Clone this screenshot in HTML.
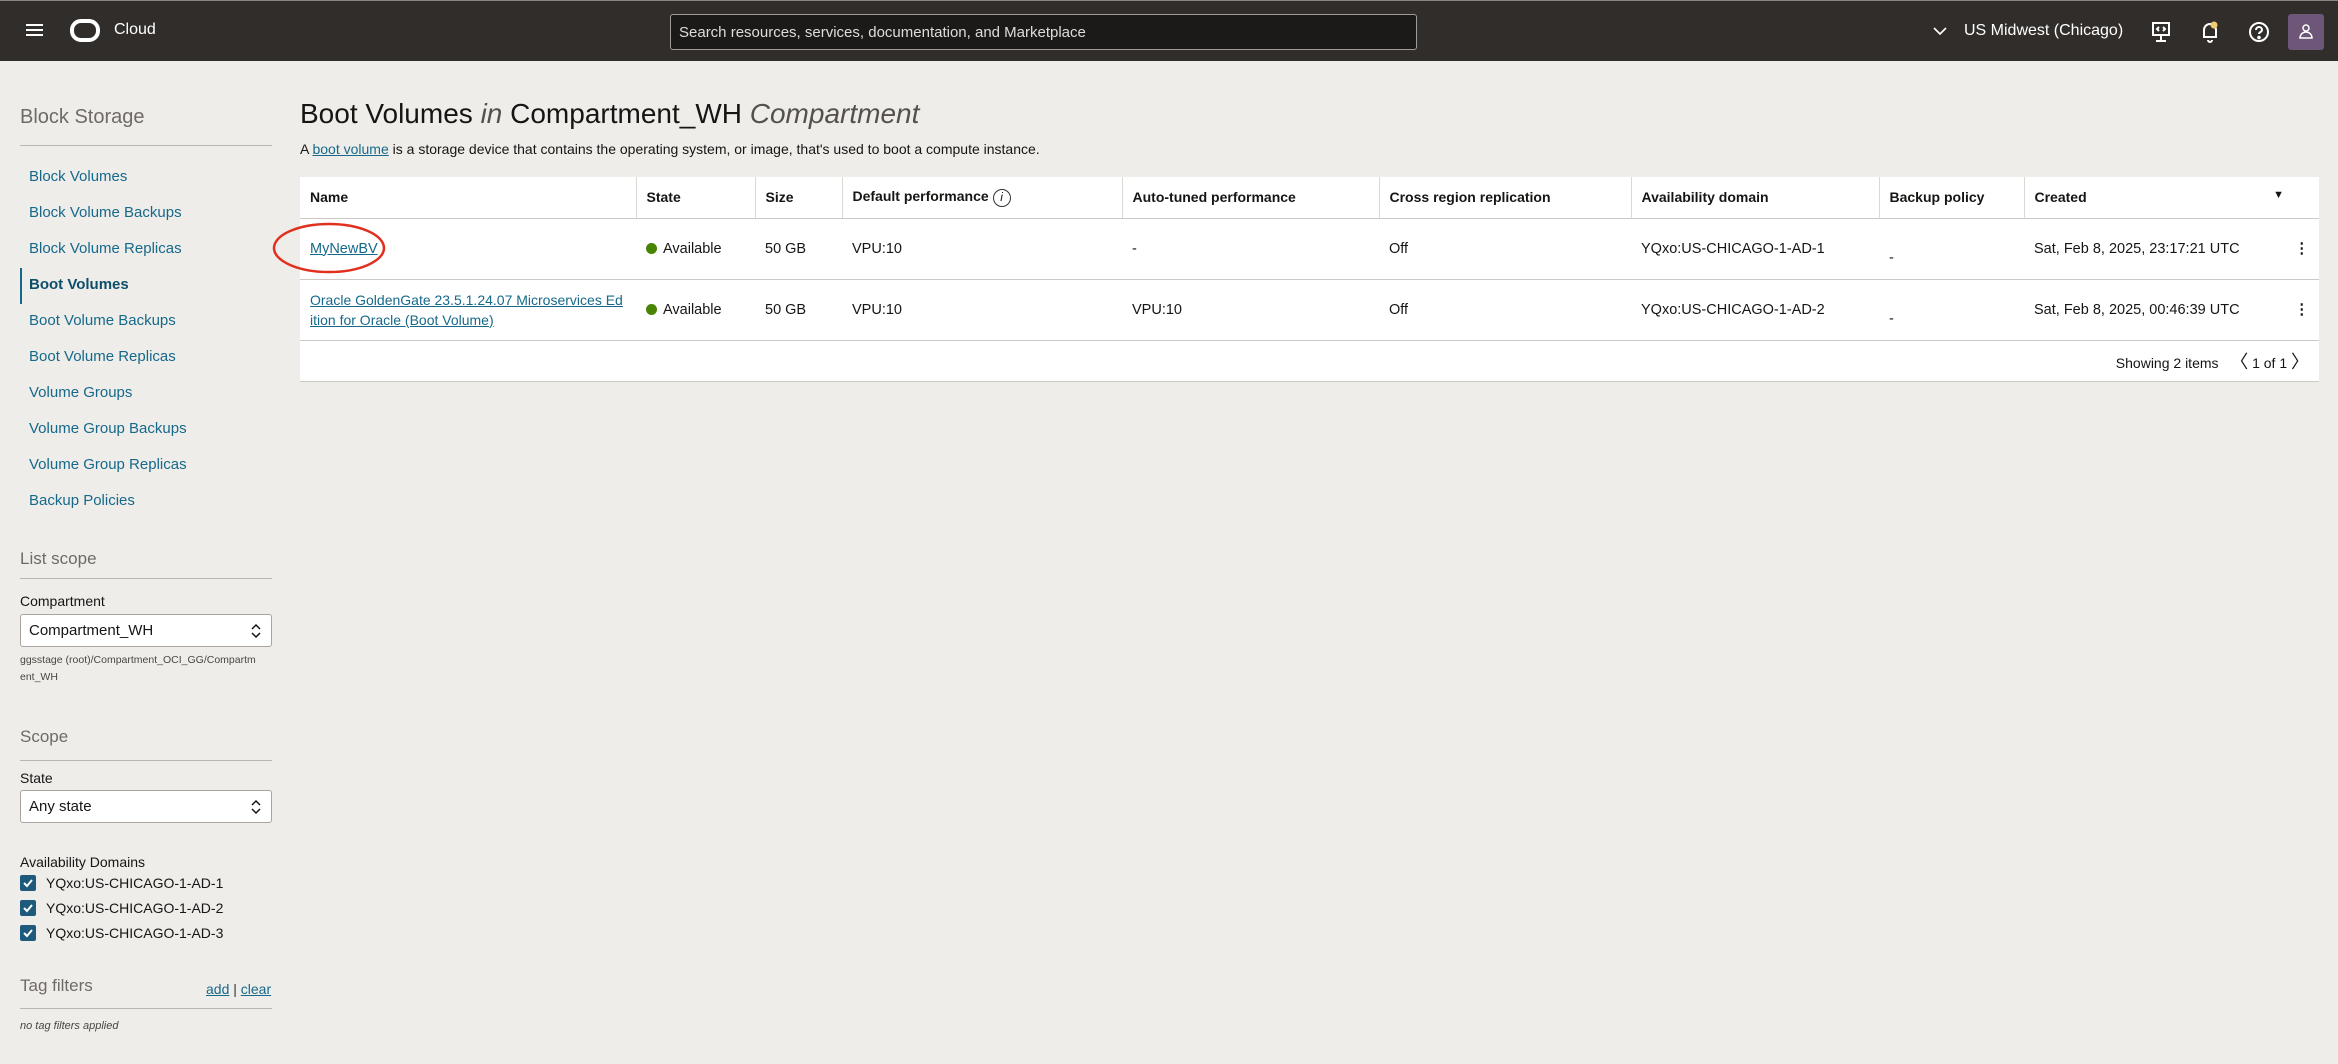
<!DOCTYPE html>
<html><head><meta charset="utf-8">
<style>
*{box-sizing:border-box;margin:0;padding:0}
body{width:2338px;height:1064px;overflow:hidden;background:#efedea;font-family:"Liberation Sans",Arial,sans-serif;color:#161513;position:relative}
.hdr{position:absolute;left:0;top:0;width:2338px;height:61px;background:#312d2a;border-top:1px solid #8a8580}
.abs{position:absolute}
.link{color:#16698a}
.side .lnk{position:absolute;left:29px;font-size:15px;color:#16698a}
.sec{position:absolute;left:20px;font-size:17px;color:#6f6a65}
.line{position:absolute;left:20px;width:252px;height:1px;background:#b9b4ae}
.lbl{position:absolute;left:20px;font-size:14px;color:#161513}
.sel{position:absolute;left:20px;width:252px;height:33px;background:#fff;border:1px solid #a9a49f;border-radius:3px;font-size:15px;padding:7px 8px}
.sel svg{position:absolute;right:9px;top:9px}
.cb{position:absolute;left:20px;width:16px;height:16px;background:#1d5a7b;border-radius:2px}
.cbt{position:absolute;left:46px;font-size:14px}
table{position:absolute;left:300px;top:177px;width:2019px;border-collapse:collapse;background:#fff;font-size:14.5px}
td,th{border-bottom:1px solid #ccc8c3;text-align:left;padding:0 10px;vertical-align:middle;white-space:nowrap}
th{height:41px;font-weight:bold;font-size:14px;border-right:1px solid #dcd8d3}
td{height:61px}
.dot{display:inline-block;width:11px;height:11px;border-radius:50%;background:#478400;margin-right:6px;vertical-align:-1px}
</style></head><body>
<div class="hdr">
 <div class="abs" style="left:26px;top:23px;width:17px;height:2px;background:#fff;box-shadow:0 5px 0 #fff,0 10px 0 #fff"></div>
 <div class="abs" style="left:70px;top:18px;width:30px;height:23px;border:4px solid #fff;border-radius:11px"></div>
 <div class="abs" style="left:114px;top:20px;font-size:16px;color:#fff">Cloud</div>
 <div class="abs" style="left:670px;top:13px;width:747px;height:36px;background:#1c1a18;border:1px solid #a19c97;border-radius:3px;color:#ddd;font-size:15px;padding:9px 8px">Search resources, services, documentation, and Marketplace</div>
 <svg class="abs" style="left:1933px;top:25px" width="14" height="10" viewBox="0 0 14 10" fill="none" stroke="#fff" stroke-width="1.6"><path d="M1 2l6 6 6-6"/></svg>
 <div class="abs" style="left:1964px;top:21px;color:#fff;font-size:16px">US Midwest (Chicago)</div>
 <svg class="abs" style="left:2151px;top:20px" width="20" height="22" viewBox="0 0 20 22" fill="none" stroke="#fff" stroke-width="2"><rect x="2" y="2" width="16" height="12"/><path d="M10 14v6M5 20h10M8 6l-2 2 2 2M12 6l2 2-2 2"/></svg>
 <svg class="abs" style="left:2200px;top:19px" width="20" height="24" viewBox="0 0 20 24" fill="none" stroke="#fff" stroke-width="2"><path d="M4 17V10a6 6 0 0112 0v7H3M8 20a2 2 0 004 0"/><circle cx="14" cy="5" r="3.5" fill="#f0cc71" stroke="none"/></svg>
 <svg class="abs" style="left:2248px;top:20px" width="22" height="22" viewBox="0 0 22 22" fill="none" stroke="#fff" stroke-width="2"><circle cx="11" cy="11" r="9"/><path d="M8 9a3 3 0 116 0c0 2-3 2-3 4"/><circle cx="11" cy="16.5" r=".8" fill="#fff"/></svg>
 <div class="abs" style="left:2288px;top:13px;width:36px;height:36px;background:#6d5677;border-radius:3px"><svg width="36" height="36" viewBox="0 0 36 36" fill="none" stroke="#fff" stroke-width="1.5"><circle cx="18" cy="14" r="3"/><path d="M12 24a6 6 0 0112 0z"/></svg></div>
</div>

<div class="side">
 <div class="sec" style="top:106px;font-size:20px">Block Storage</div>
 <div class="line" style="top:145px"></div>
 <div class="lnk" style="top:168px">Block Volumes</div>
 <div class="lnk" style="top:204px">Block Volume Backups</div>
 <div class="lnk" style="top:240px">Block Volume Replicas</div>
 <div class="abs" style="left:20px;top:268px;width:2px;height:36px;background:#16698a"></div>
 <div class="lnk" style="top:276px;font-weight:bold;color:#0d4f6b">Boot Volumes</div>
 <div class="lnk" style="top:312px">Boot Volume Backups</div>
 <div class="lnk" style="top:348px">Boot Volume Replicas</div>
 <div class="lnk" style="top:384px">Volume Groups</div>
 <div class="lnk" style="top:420px">Volume Group Backups</div>
 <div class="lnk" style="top:456px">Volume Group Replicas</div>
 <div class="lnk" style="top:492px">Backup Policies</div>
 <div class="sec" style="top:549px">List scope</div>
 <div class="line" style="top:578px"></div>
 <div class="lbl" style="top:593px">Compartment</div>
 <div class="sel" style="top:614px">Compartment_WH<svg width="12" height="14" viewBox="0 0 12 14" fill="none" stroke="#161513" stroke-width="1.5"><path d="M2 5l4-4 4 4M2 9l4 4 4-4"/></svg></div>
 <div class="abs" style="left:20px;top:652px;font-size:10.5px;color:#4a4642;line-height:17px;width:255px">ggsstage (root)/Compartment_OCI_GG/Compartm<br>ent_WH</div>
 <div class="sec" style="top:727px">Scope</div>
 <div class="line" style="top:760px"></div>
 <div class="lbl" style="top:770px">State</div>
 <div class="sel" style="top:790px">Any state<svg width="12" height="14" viewBox="0 0 12 14" fill="none" stroke="#161513" stroke-width="1.5"><path d="M2 5l4-4 4 4M2 9l4 4 4-4"/></svg></div>
 <div class="lbl" style="top:854px">Availability Domains</div>
 <div class="cb" style="top:875px"><svg width="16" height="16"><path d="M4 8l3 3 5-6" fill="none" stroke="#fff" stroke-width="2"/></svg></div><div class="cbt" style="top:875px">YQxo:US-CHICAGO-1-AD-1</div>
 <div class="cb" style="top:900px"><svg width="16" height="16"><path d="M4 8l3 3 5-6" fill="none" stroke="#fff" stroke-width="2"/></svg></div><div class="cbt" style="top:900px">YQxo:US-CHICAGO-1-AD-2</div>
 <div class="cb" style="top:925px"><svg width="16" height="16"><path d="M4 8l3 3 5-6" fill="none" stroke="#fff" stroke-width="2"/></svg></div><div class="cbt" style="top:925px">YQxo:US-CHICAGO-1-AD-3</div>
 <div class="sec" style="top:976px">Tag filters</div>
 <div class="abs" style="left:206px;top:981px;font-size:14px;color:#16698a"><u>add</u> <span style="color:#333">|</span> <u>clear</u></div>
 <div class="line" style="top:1008px"></div>
 <div class="abs" style="left:20px;top:1020px;font-size:11px;font-style:italic;color:#4a4642">no tag filters applied</div>
</div>
<div class="abs" style="left:300px;top:98px;font-size:28px">Boot Volumes <i style="color:#55504b">in</i> Compartment_WH <i style="color:#55504b">Compartment</i></div>
<div class="abs" style="left:300px;top:141px;font-size:14px">A <u class="link">boot volume</u> is a storage device that contains the operating system, or image, that's used to boot a compute instance.</div>

<table>
<tr><th style="width:336px">Name</th><th style="width:119px">State</th><th style="width:87px">Size</th><th style="width:280px">Default performance <span style="display:inline-block;width:18px;height:18px;border:1.5px solid #333;border-radius:50%;font-size:12px;text-align:center;line-height:15px;font-style:italic;font-weight:normal">i</span></th><th style="width:257px">Auto-tuned performance</th><th style="width:252px">Cross region replication</th><th style="width:248px">Availability domain</th><th style="width:145px">Backup policy</th><th style="border-right:none">Created<span style="float:right;font-size:11px;margin-right:25px">&#9660;</span></th></tr>
<tr><td><u class="link">MyNewBV</u></td><td><span class="dot"></span>Available</td><td>50 GB</td><td>VPU:10</td><td>-</td><td>Off</td><td>YQxo:US-CHICAGO-1-AD-1</td><td style="padding-top:18px">-</td><td>Sat, Feb 8, 2025, 23:17:21 UTC<span style="float:right;font-weight:bold">&#8942;</span></td></tr>
<tr><td style="line-height:20px;font-size:14px"><u class="link">Oracle GoldenGate 23.5.1.24.07 Microservices Ed<br>ition for Oracle (Boot Volume)</u></td><td><span class="dot"></span>Available</td><td>50 GB</td><td>VPU:10</td><td>VPU:10</td><td>Off</td><td>YQxo:US-CHICAGO-1-AD-2</td><td style="padding-top:18px">-</td><td>Sat, Feb 8, 2025, 00:46:39 UTC<span style="float:right;font-weight:bold">&#8942;</span></td></tr>
<tr><td colspan="9" style="height:41px;text-align:right;font-size:14px;border-bottom:1px solid #ccc8c3">Showing 2 items &nbsp;&nbsp;<span style="font-size:18px">&#x2329;</span> 1 of 1 <span style="font-size:18px">&#x232A;</span></td></tr>
</table>
<svg class="abs" style="left:270px;top:218px" width="160" height="60"><ellipse cx="59" cy="30" rx="55" ry="24" fill="none" stroke="#e0301e" stroke-width="2.5"/></svg>
</body></html>
